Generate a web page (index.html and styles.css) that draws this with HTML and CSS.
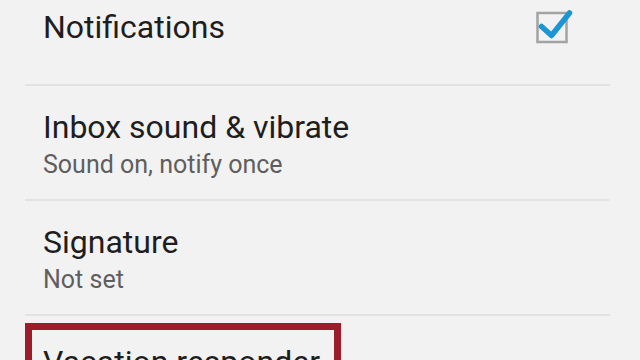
FILE: index.html
```html
<!DOCTYPE html>
<html>
<head>
<meta charset="utf-8">
<link rel="stylesheet" href="styles.css">
</head>
<body>
<div class="list">
  <div class="row row-first">
    <div class="title">Notifications</div>
    <svg class="check" width="40" height="40" viewBox="0 0 40 40">
      <rect x="3.5" y="5" width="29" height="29" fill="none" stroke="#a3a3a3" stroke-width="2.5"/>
      <path d="M7.5 18.5 L17.5 27.5 L35.5 5" fill="none" stroke="#1b95d3" stroke-width="5.5" stroke-linejoin="round" stroke-linecap="round"/>
    </svg>
  </div>
  <div class="divider"></div>
  <div class="row">
    <div class="title">Inbox sound &amp; vibrate</div>
    <div class="sub">Sound on, notify once</div>
  </div>
  <div class="divider"></div>
  <div class="row">
    <div class="title">Signature</div>
    <div class="sub">Not set</div>
  </div>
  <div class="divider"></div>
  <div class="row row-last">
    <div class="highlight">
      <div class="title">Vacation responder</div>
    </div>
  </div>
</div>
</body>
</html>
```
FILE: styles.css
```css
html, body {
  margin: 0;
  padding: 0;
  background: #f2f2f2;
  overflow: hidden;
}
body {
  width: 640px;
  height: 360px;
  font-family: Roboto, "Liberation Sans", sans-serif;
}
.list {
  display: flex;
  flex-direction: column;
}
.row {
  display: flex;
  flex-direction: column;
  padding: 23px 0 20px 43px;
}
.row-first {
  flex-direction: row;
  justify-content: space-between;
  align-items: flex-start;
  height: 75px;
  padding: 9px 66px 0 43px;
}
.row-first .check {
  margin-top: -1px;
}
.title {
  font-size: 32px;
  line-height: 36px;
  color: #1e1e1e;
  white-space: nowrap;
}
.sub {
  margin-top: 6px;
  font-size: 25px;
  line-height: 28px;
  color: #5e5e5e;
  white-space: nowrap;
}
.divider {
  height: 2px;
  margin: 0 30px 0 25px;
  background: #e3e3e3;
}
.row-last {
  padding: 7px 0 0 25px;
}
.highlight {
  box-sizing: border-box;
  width: 316px;
  border: 7px solid #9c1c2e;
  padding: 14px 0 20px 11px;
}
```
